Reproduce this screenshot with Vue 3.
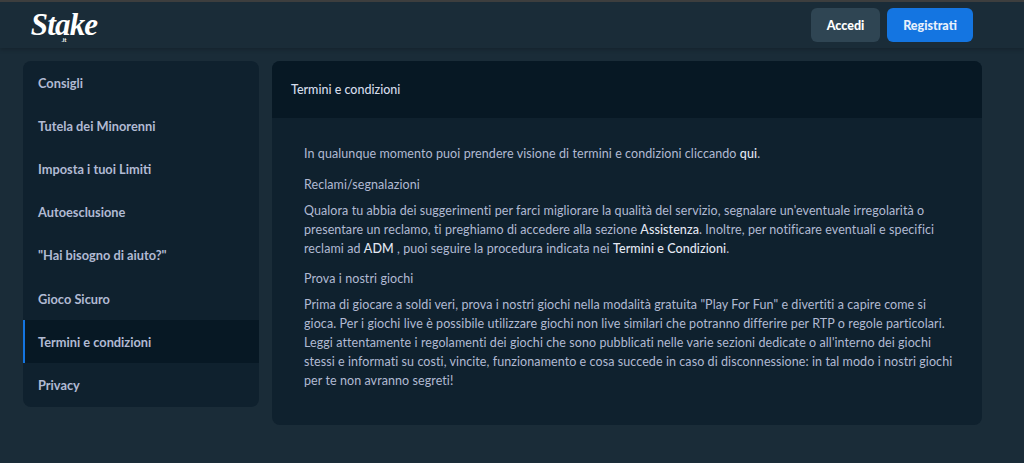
<template>
  <div class="page">
    <header class="topbar">
      <div class="logo">
        <span class="logo-name">Stake</span>
        <span class="logo-tld">.it</span>
      </div>
      <div class="actions">
        <button class="btn btn-login">Accedi</button>
        <button class="btn btn-signup">Registrati</button>
      </div>
    </header>

    <div class="layout">
      <nav class="sidebar">
        <a
          v-for="item in menu"
          :key="item"
          class="menu-item"
          :class="{ active: item === current }"
        >{{ item }}</a>
      </nav>

      <main class="panel">
        <div class="panel-title">Termini e condizioni</div>
        <div class="panel-body">
          <p class="intro">In qualunque momento puoi prendere visione di termini e condizioni cliccando <b>qui</b>.</p>
          <p class="heading">Reclami/segnalazioni</p>
          <p class="block">
            Qualora tu abbia dei suggerimenti per farci migliorare la qualità del servizio, segnalare un'eventuale irregolarità o<br>
            presentare un reclamo, ti preghiamo di accedere alla sezione <b>Assistenza</b>. Inoltre, per notificare eventuali e specifici<br>
            reclami ad <b>ADM</b> , puoi seguire la procedura indicata nei <b>Termini e Condizioni</b>.
          </p>
          <p class="heading">Prova i nostri giochi</p>
          <p class="block last">
            Prima di giocare a soldi veri, prova i nostri giochi nella modalità gratuita "Play For Fun" e divertiti a capire come si<br>
            gioca. Per i giochi live è possibile utilizzare giochi non live similari che potranno differire per RTP o regole particolari.<br>
            Leggi attentamente i regolamenti dei giochi che sono pubblicati nelle varie sezioni dedicate o all'interno dei giochi<br>
            stessi e informati su costi, vincite, funzionamento e cosa succede in caso di disconnessione: in tal modo i nostri giochi<br>
            per te non avranno segreti!
          </p>
        </div>
      </main>
    </div>
  </div>
</template>

<script setup>
const current = "Termini e condizioni";

const menu = [
  "Consigli",
  "Tutela dei Minorenni",
  "Imposta i tuoi Limiti",
  "Autoesclusione",
  '"Hai bisogno di aiuto?"',
  "Gioco Sicuro",
  "Termini e condizioni",
  "Privacy",
];
</script>

<style>
html, body {
  margin: 0;
  background: #1a2c38;
}
</style>

<style scoped>
.page {
  height: 463px;
  overflow: hidden;
  background: #1a2c38;
  font-family: Lato, "Noto Sans", sans-serif;
  color: #b1bad3;
}

/* HEADER */
.topbar {
  height: 46px;
  border-top: 2px solid #3d3e3e;
  display: flex;
  align-items: center;
  justify-content: space-between;
  padding: 0 51px 0 32px;
  background: #1a2c38;
  box-shadow: 0 2px 4px rgba(0, 0, 0, 0.18);
}
.logo {
  display: flex;
  flex-direction: column;
  align-items: center;
  width: 64px;
  padding-top: 3px;
  color: #fff;
}
.logo-name {
  font-family: "Liberation Serif", serif;
  font-style: italic;
  font-weight: 700;
  font-size: 31px;
  line-height: 27px;
  letter-spacing: -0.8px;
}
.logo-tld {
  font-size: 6px;
  line-height: 6px;
  font-weight: 700;
  margin-top: -1px;
}
.actions {
  display: flex;
  gap: 7px;
}
.btn {
  height: 34px;
  border: none;
  border-radius: 6px;
  font-family: inherit;
  font-size: 12.5px;
  font-weight: 900;
  padding: 0;
}
.btn-login {
  width: 69px;
  background: #2f4553;
  color: #fff;
}
.btn-signup {
  width: 86px;
  background: #1475e1;
  color: #e8f1fc;
}

/* LAYOUT */
.layout {
  display: flex;
  align-items: flex-start;
  gap: 13px;
  padding: 13px 42px 0 23px;
}

/* SIDEBAR */
.sidebar {
  width: 236px;
  flex: none;
  background: #0f212e;
  border-radius: 8px;
  overflow: hidden;
}
.menu-item {
  display: flex;
  align-items: center;
  height: 43.2px;
  padding-left: 13px;
  border-left: 2px solid transparent;
  box-sizing: border-box;
  font-size: 12.8px;
  font-weight: 700;
  color: #b1bad3;
}
.menu-item.active {
  background: #071824;
  border-left-color: #1475e1;
}

/* PANEL */
.panel {
  flex: 1;
  background: #0f212e;
  border-radius: 8px;
  overflow: hidden;
}
.panel-title {
  height: 57px;
  display: flex;
  align-items: center;
  padding-left: 19px;
  background: #071824;
  font-size: 12.5px;
  font-weight: 500;
  color: #d5dceb;
}
.panel-body {
  padding: 26px 32px 0;
  height: 281px;
  font-size: 12.5px;
  letter-spacing: 0.08px;
  line-height: 19px;
  white-space: nowrap;
}
.panel-body p {
  margin: 0;
}
.panel-body b {
  font-weight: 500;
  color: #e3e8f3;
}
.intro {
  margin-bottom: 12px !important;
}
.heading {
  margin-bottom: 7px !important;
}
.block {
  margin-bottom: 11px !important;
}
.block.last {
  margin-bottom: 0 !important;
}
</style>
